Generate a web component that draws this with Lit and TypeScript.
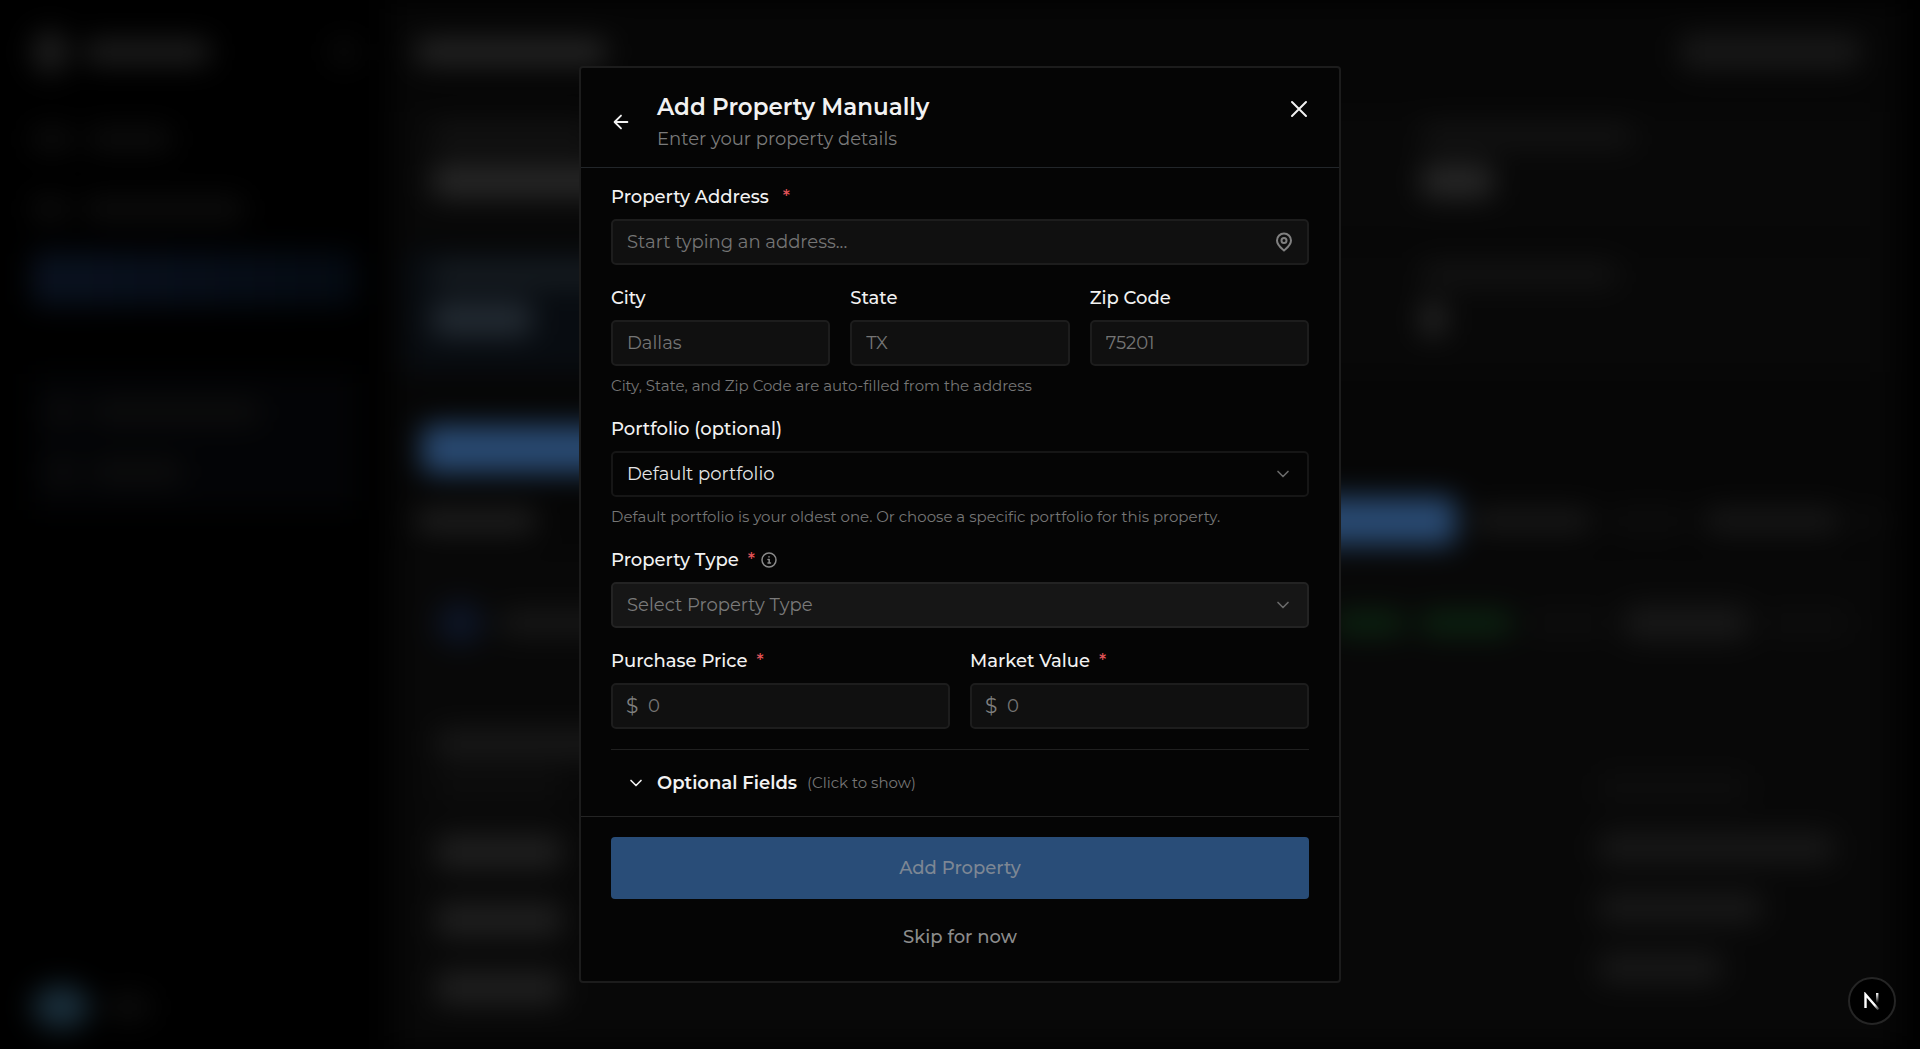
import { LitElement, html, css, svg } from "lit";
import { customElement, property, state } from "lit/decorators.js";
import { styleMap } from "lit/directives/style-map.js";

const arrowLeft = svg`<path d="M19 12H5.500M12 19l-7-7 7-7" />`;
const chevron = svg`<path d="M6 9l6 6 6-6" />`;

/** Dimmed, blurred dashboard that sits behind the dialog. */
@customElement("dashboard-backdrop")
export class DashboardBackdrop extends LitElement {
  static styles = css`
    :host {
      display: grid;
      grid-template-columns: 388px minmax(0, 1fr) 16px;
      background: #000;
      filter: blur(14px);
    }
    .bar {
      flex: none;
      height: 24px;
      border-radius: 8px;
      background: #111;
    }
    .faint { background: #0d0d0d; }
    .soft { background: #181818; }
    .mid { background: #1f1f1f; }
    .bright { background: #272727; }
    .blue { background: #294a72; }
    .navy { background: #0d1526; }
    .sky { background: #1a2f3c; }
    .slate { background: #171d22; }
    .slate.tall { background: #232b33; }
    .green { background: #0c2411; }
    .tall { height: 34px; }
    .button { height: 48px; }
    .round { height: 44px; border-radius: 50%; }
    .row {
      display: flex;
      align-items: center;
      gap: 16px;
    }
    .side {
      display: flex;
      flex-direction: column;
      padding: 32px 32px 20px;
    }
    .brand { height: 40px; }
    .push { margin-left: auto; }
    .nav {
      display: flex;
      flex-direction: column;
      gap: 16px;
      padding-top: 40px;
    }
    .nav .row { height: 54px; }
    .nav .active {
      background: linear-gradient(90deg, #0a1220, #040a12);
      border-radius: 8px;
    }
    .group {
      margin-top: 68px;
      padding: 8px 16px;
      background: #030406;
    }
    .group .row { height: 60px; }
    .user { margin-top: auto; }
    .main {
      display: flex;
      flex-direction: column;
      padding: 32px 24px 0 16px;
      background: #060606;
    }
    .top { height: 40px; padding: 0 20px 0 12px; }
    .stats {
      display: grid;
      grid-template-columns: repeat(3, minmax(0, 1fr));
      gap: 16px 8px;
      margin-top: 40px;
    }
    .card {
      display: flex;
      flex-direction: column;
      gap: 16px;
      height: 90px;
      padding: 12px 28px 20px;
      background: #080808;
    }
    .card .soft { background: #131313; }
    .tint { background: #080c11; }
    .actions { margin-top: 53px; padding-left: 18px; }
    .heading { margin-top: 24px; padding-left: 12px; }
    .list {
      display: flex;
      flex-direction: column;
      flex: 1;
      padding: 48px 32px 0;
      margin-top: 8px;
      background: #080808;
    }
    .cols {
      display: grid;
      grid-template-columns: minmax(0, 1fr) 250px;
      margin-top: 84px;
    }
    .stack {
      display: flex;
      flex-direction: column;
      align-items: flex-start;
      gap: 34px;
    }
    .stack .bar { height: 30px; }
    .stack .mid { height: 34px; }
    .pair {
      display: flex;
      flex-direction: column;
      gap: 12px;
    }
    .later { gap: 30px; padding-top: 44px; }
  `;

  private bar(width: number, tone: string) {
    return html`<div class="bar ${tone}" style=${styleMap({ width: `${width}px` })}></div>`;
  }

  private card(label: number, value: number, tint = "") {
    return html`<div class="card ${tint}">
      ${this.bar(label, tint ? "slate" : "soft")}
      ${this.bar(value, tint ? "slate tall" : "bright tall")}
    </div>`;
  }

  render() {
    return html`
      <div class="side">
        <div class="row brand">
          ${this.bar(36, "round mid")}${this.bar(126, "mid")}
          <div class="push">${this.bar(24, "faint")}</div>
        </div>
        <div class="nav">
          <div class="row">${this.bar(40, "faint")}${this.bar(84, "faint")}</div>
          <div class="row">${this.bar(36, "faint")}${this.bar(160, "faint")}</div>
          <div class="row active"></div>
        </div>
        <div class="group">
          <div class="row">${this.bar(28, "faint")}${this.bar(168, "faint")}</div>
          <div class="row">${this.bar(28, "faint")}${this.bar(90, "faint")}</div>
        </div>
        <div class="row user">${this.bar(58, "round sky")}${this.bar(44, "faint")}</div>
      </div>
      <div class="main">
        <div class="row top">
          ${this.bar(190, "bright")}
          <div class="push">${this.bar(180, "soft tall")}</div>
        </div>
        <div class="stats">
          ${this.card(160, 200)}${this.card(160, 200)}${this.card(212, 72)}
          ${this.card(200, 100, "tint")}${this.card(160, 100)}${this.card(196, 24)}
        </div>
        <div class="row actions">${this.bar(320, "blue button")}</div>
        <div class="row heading">
          ${this.bar(120, "mid")}
          <div class="push">${this.bar(200, "blue button")}</div>
          ${this.bar(120, "soft")}
          ${this.bar(80, "faint")}
          ${this.bar(136, "soft")}
          ${this.bar(24, "faint")}
        </div>
        <div class="list">
          <div class="row">
            ${this.bar(48, "round navy")}${this.bar(160, "soft")}
            <div class="push row">
              ${this.bar(70, "green")}${this.bar(92, "green")}
            </div>
            ${this.bar(80, "faint")}${this.bar(124, "soft tall")}${this.bar(84, "faint")}
          </div>
          <div class="cols">
            <div class="stack">
              <div class="pair">
                ${this.bar(200, "soft")}
                ${this.bar(126, "faint")}
              </div>
              ${this.bar(126, "mid")}
              ${this.bar(126, "mid")}
              ${this.bar(126, "mid")}
            </div>
            <div class="stack later">
              ${this.bar(150, "faint")}
              ${this.bar(236, "soft")}
              ${this.bar(164, "soft")}
              ${this.bar(124, "soft")}
            </div>
          </div>
        </div>
      </div>
      <div></div>
    `;
  }
}

/** Dialog for entering a property by hand, shown over the dashboard. */
@customElement("app-root")
export class AppRoot extends LitElement {
  @property({ type: Boolean }) submittable = false;
  @state() private expanded = false;

  static styles = css`
    :host {
      display: block;
      position: relative;
      min-height: 100vh;
      overflow: hidden;
      background: #000;
      color: #f2f2f2;
      font-family: "Montserrat", "Inter", sans-serif;
      font-size: 18px;
      line-height: 24px;
    }
    * { box-sizing: border-box; }
    dashboard-backdrop {
      position: absolute;
      inset: 0;
    }
    .overlay {
      position: relative;
      display: grid;
      place-items: center;
      min-height: 100vh;
    }
    .dialog {
      width: min(762px, 100%);
      background: #050505;
      border: 2px solid #1c1c1c;
      border-radius: 4px;
    }
    button {
      font: inherit;
      color: inherit;
      background: none;
      border: 0;
      padding: 0;
      cursor: pointer;
    }
    svg {
      display: block;
      fill: none;
      stroke: currentColor;
      stroke-width: 2;
      stroke-linecap: round;
      stroke-linejoin: round;
    }
    .header {
      display: flex;
      align-items: center;
      padding: 24px 30px 16px 29px;
      border-bottom: 1px solid #22262a;
    }
    .titles {
      flex: 1;
      padding-left: 25px;
    }
    h2 {
      margin: 0 0 5px;
      font-size: 23px;
      line-height: 30px;
      font-weight: 600;
    }
    .subtitle {
      margin: 0;
      color: #7a7a7a;
    }
    .close {
      align-self: flex-start;
      padding: 7px 0;
    }
    .body {
      display: flex;
      flex-direction: column;
      gap: 21px;
      padding: 17px 30px 0;
    }
    .field {
      display: flex;
      flex-direction: column;
      gap: 10px;
      min-width: 0;
    }
    .group {
      display: flex;
      flex-direction: column;
      gap: 10px;
    }
    .columns {
      display: grid;
      grid-auto-flow: column;
      grid-auto-columns: minmax(0, 1fr);
      gap: 20px;
    }
    .label {
      display: flex;
      align-items: center;
      gap: 9px;
      font-weight: 500;
    }
    .label.wide { gap: 14px; }
    .star { color: #e5555a; }
    .info {
      margin-left: -3px;
      color: #8a8a8a;
    }
    .control {
      display: grid;
      align-items: center;
    }
    .control > * { grid-area: 1 / 1; }
    input,
    select {
      appearance: none;
      width: 100%;
      height: 46px;
      margin: 0;
      padding: 0 14px;
      font: inherit;
      color: #e4e4e4;
      background: #101010;
      border: 2px solid #1d1d1d;
      border-radius: 5px;
      outline: none;
    }
    input::placeholder {
      color: #757575;
      opacity: 1;
    }
    .portfolio {
      background: #050505;
      border-color: #161616;
    }
    .type {
      color: #7a7a7a;
      background: #161616;
      border-color: #232323;
    }
    .money { padding-left: 35px; }
    .prefix {
      padding-left: 15px;
      font-size: 20px;
      color: #808080;
      pointer-events: none;
    }
    .trailing {
      justify-self: end;
      margin-right: 16px;
      color: #6a6a6a;
      pointer-events: none;
    }
    .pin { color: #808080; }
    .help {
      margin: 0;
      font-size: 15px;
      line-height: 20px;
      color: #767676;
    }
    .optional {
      display: flex;
      align-items: center;
      height: 67px;
      margin-top: -1px;
      padding-left: 15px;
      border-top: 1px solid #202020;
      text-align: left;
    }
    .optional .name {
      padding: 0 10px 0 11px;
      font-weight: 600;
    }
    .hint {
      font-size: 15px;
      color: #767676;
    }
    .footer {
      display: flex;
      flex-direction: column;
      gap: 10px;
      padding: 20px 30px 16px;
      border-top: 1px solid #242424;
    }
    .submit {
      height: 62px;
      font-weight: 500;
      color: #7d8794;
      background: #294d78;
      border-radius: 4px;
    }
    .skip {
      height: 56px;
      font-weight: 500;
      color: #8c8c8c;
    }
    .badge {
      position: absolute;
      right: 24px;
      bottom: 24px;
      display: grid;
      place-items: center;
      width: 48px;
      height: 48px;
      border: 2px solid #252525;
      border-radius: 50%;
      background: #000;
    }
    .badge svg {
      stroke-linecap: butt;
      stroke-linejoin: miter;
    }
  `;

  private textField(id: string, label: string, placeholder: string) {
    return html`<div class="field">
      <label class="label" for=${id}>${label}</label>
      <input id=${id} type="text" placeholder=${placeholder} />
    </div>`;
  }

  private moneyField(id: string, label: string) {
    return html`<div class="field">
      <label class="label" for=${id}>${label}<span class="star">*</span></label>
      <div class="control">
        <input class="money" id=${id} inputmode="decimal" placeholder="0" />
        <span class="prefix">$</span>
      </div>
    </div>`;
  }

  private chevronMark() {
    return html`<svg class="trailing" width="20" height="20" viewBox="0 0 24 24" aria-hidden="true">${chevron}</svg>`;
  }

  render() {
    return html`
      <dashboard-backdrop aria-hidden="true"></dashboard-backdrop>
      <div class="overlay">
        <form class="dialog" role="dialog" aria-labelledby="title" @submit=${(e: Event) => e.preventDefault()}>
          <header class="header">
            <button type="button" aria-label="Back">
              <svg width="22" height="22" viewBox="0 0 24 24">${arrowLeft}</svg>
            </button>
            <div class="titles">
              <h2 id="title">Add Property Manually</h2>
              <p class="subtitle">Enter your property details</p>
            </div>
            <button class="close" type="button" aria-label="Close">
              <svg width="20" height="20" viewBox="0 0 20 20"><path d="M3 3l14 14M17 3L3 17" /></svg>
            </button>
          </header>

          <div class="body">
            <div class="field">
              <label class="label wide" for="address">Property Address<span class="star">*</span></label>
              <div class="control">
                <input id="address" type="text" placeholder="Start typing an address..." />
                <svg class="trailing pin" width="18" height="20" viewBox="0 0 18 20" aria-hidden="true">
                  <path d="M9 18.500C7.500 17 2 13.500 2 8.500a7 7 0 0 1 14 0c0 5-5.500 8.500-7 10z" />
                  <circle cx="9" cy="8.500" r="2.500" />
                </svg>
              </div>
            </div>

            <div class="group">
              <div class="columns">
                ${this.textField("city", "City", "Dallas")}
                ${this.textField("state", "State", "TX")}
                ${this.textField("zip", "Zip Code", "75201")}
              </div>
              <p class="help">City, State, and Zip Code are auto-filled from the address</p>
            </div>

            <div class="field">
              <label class="label" for="portfolio">Portfolio (optional)</label>
              <div class="control">
                <select class="portfolio" id="portfolio">
                  <option>Default portfolio</option>
                </select>
                ${this.chevronMark()}
              </div>
              <p class="help">Default portfolio is your oldest one. Or choose a specific portfolio for this property.</p>
            </div>

            <div class="field">
              <label class="label" for="type">
                Property Type<span class="star">*</span>
                <svg class="info" width="16" height="16" viewBox="0 0 16 16" aria-hidden="true">
                  <circle cx="8" cy="8" r="7" stroke-width="1.500" />
                  <path d="M7 7.500h1.200v3.500M7 11h2.500M8 4.700v.2" stroke-width="1.500" />
                </svg>
              </label>
              <div class="control">
                <select class="type" id="type">
                  <option>Select Property Type</option>
                </select>
                ${this.chevronMark()}
              </div>
            </div>

            <div class="columns">
              ${this.moneyField("price", "Purchase Price")}
              ${this.moneyField("value", "Market Value")}
            </div>

            <button
              class="optional"
              type="button"
              aria-expanded=${this.expanded}
              @click=${() => (this.expanded = !this.expanded)}
            >
              <svg width="20" height="20" viewBox="0 0 24 24" aria-hidden="true">${chevron}</svg>
              <span class="name">Optional Fields</span>
              <span class="hint">(Click to show)</span>
            </button>
          </div>

          <footer class="footer">
            <button class="submit" type="submit" ?disabled=${!this.submittable}>Add Property</button>
            <button class="skip" type="button">Skip for now</button>
          </footer>
        </form>
      </div>
      <button class="badge" type="button" aria-label="Open developer tools">
        <svg width="18" height="18" viewBox="0 0 18 18" aria-hidden="true">
          <defs>
            <linearGradient id="fade-down" x1="0" y1="0" x2="0" y2="1">
              <stop offset="0" stop-color="#fff" />
              <stop offset="1" stop-color="#fff" stop-opacity="0" />
            </linearGradient>
            <linearGradient id="fade-end" x1="0" y1="0" x2="1" y2="1">
              <stop offset="0.700" stop-color="#fff" />
              <stop offset="1" stop-color="#fff" stop-opacity="0.200" />
            </linearGradient>
          </defs>
          <path d="M2.500 16V2.500L15.500 17.500" stroke="url(#fade-end)" stroke-width="2.400" />
          <rect x="13" y="1" width="2.400" height="10" fill="url(#fade-down)" stroke="none" />
        </svg>
      </button>
    `;
  }
}
